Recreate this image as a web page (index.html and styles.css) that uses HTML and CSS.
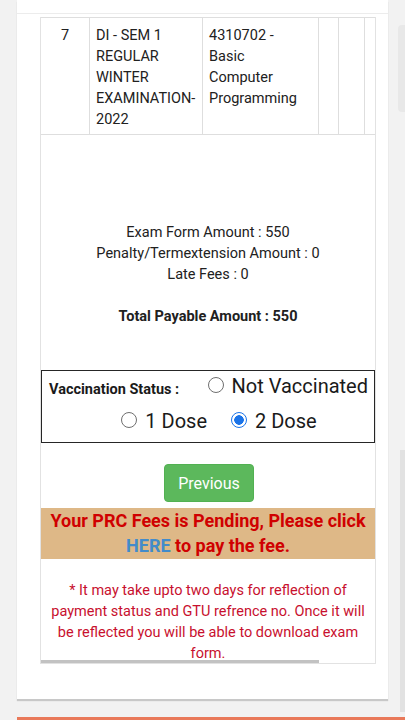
FILE: index.html
```html
<!DOCTYPE html>
<html>
<head>
<meta charset="utf-8">
<link rel="stylesheet" href="styles.css">
</head>
<body>
<div class="page">
  <div class="card">
    <div class="card-top"></div>
    <div class="box">
      <table class="grid">
        <colgroup>
          <col class="w1"><col class="w2"><col class="w3"><col class="w4"><col class="w5"><col class="w6">
        </colgroup>
        <tr>
          <td class="num">7</td>
          <td>DI - SEM 1<br>REGULAR<br>WINTER<br>EXAMINATION-<br>2022</td>
          <td>4310702 -<br>Basic<br>Computer<br>Programming</td>
          <td></td><td></td><td class="last"></td>
        </tr>
      </table>
      <div class="amounts">
        <div>Exam Form Amount : 550</div>
        <div>Penalty/Termextension Amount : 0</div>
        <div>Late Fees : 0</div>
        <div class="total">Total Payable Amount : 550</div>
      </div>
      <div class="vacc">
        <div class="vrow1">
          <span class="vlabel">Vaccination Status :</span>
          <label class="opt"><input type="radio" name="v"> Not Vaccinated</label>
        </div>
        <div class="vrow2">
          <label class="opt"><input type="radio" name="v"> 1 Dose</label>
          <label class="opt"><input type="radio" name="v" checked> 2 Dose</label>
        </div>
      </div>
      <div class="actions"><button class="btn">Previous</button></div>
      <div class="banner">Your PRC Fees is Pending, Please click <a class="here">HERE</a> to pay the fee.</div>
      <p class="note">* It may take upto two days for reflection of payment status and GTU refrence no. Once it will be reflected you will be able to download exam form.</p>
      <div class="hscroll"><div class="hthumb"></div></div>
    </div>
  </div>
  <div class="orange"></div>
</div>
<div class="vthumb"></div>
<div class="vstrip"></div>
</body>
</html>
```

FILE: styles.css
```css
html, body {
  margin: 0;
  padding: 0;
  height: 720px;
  overflow: hidden;
}
body {
  background: #f2f2f2;
  font-family: Roboto, "Liberation Sans", sans-serif;
  color: #212121;
  position: relative;
}
.page {
  padding-left: 17px;
}
.card {
  width: 371px;
  background: #fff;
  box-shadow: 0 2px 1px #c8c8c8;
  padding: 0 12px 35px 23px;
  box-sizing: border-box;
  position: relative;
}
.card-top {
  height: 13px;
  margin: 0 -12px 3px -23px;
  border-bottom: 1px solid #ececec;
}
.box {
  border: 1px solid #e2e2e2;
  border-top: none;
  width: 336px;
  box-sizing: border-box;
  position: relative;
  overflow: hidden;
}
.grid {
  border-collapse: collapse;
  table-layout: fixed;
  width: 345px;
  font-size: 14.5px;
  line-height: 21px;
  margin-left: -1px;
}
.w1 { width: 49px; }
.w2 { width: 113px; }
.w3 { width: 116px; }
.w4 { width: 20px; }
.w5 { width: 26px; }
.w6 { width: 21px; }
.grid td {
  border: 1px solid #dedede;
  vertical-align: top;
  padding: 7px 6px 4px 6px;
  white-space: nowrap;
  overflow: hidden;
}
.grid td.num {
  text-align: center;
}
.amounts {
  margin-top: 87px;
  text-align: center;
  font-size: 14.5px;
  line-height: 21px;
}
.total {
  font-weight: bold;
  margin-top: 21px;
}
.vacc {
  margin-top: 43px;
  border: 1.5px solid #262626;
  height: 73px;
  box-sizing: border-box;
  font-size: 20px;
  line-height: 24px;
  color: #1a1a1a;
}
.vrow1 {
  display: flex;
  justify-content: space-between;
  align-items: baseline;
  padding: 3px 6px 0 7px;
}
.vlabel {
  font-size: 14.5px;
  font-weight: bold;
}
.vrow2 {
  display: flex;
  justify-content: center;
  gap: 24px;
  padding: 7px 0 0 22px;
}
.opt {
  display: inline-flex;
  align-items: center;
  gap: 8px;
}
.opt input {
  appearance: none;
  -webkit-appearance: none;
  width: 16px;
  height: 16px;
  margin: 0;
  border: 1px solid #6f6f6f;
  border-radius: 50%;
  background: #fff;
  position: relative;
  top: -1px;
}
.opt input:checked {
  border: 1.5px solid #1a73e8;
  background: radial-gradient(circle, #1a73e8 0 4.5px, #fff 5px);
}
.actions {
  text-align: center;
  padding-top: 21px;
}
.btn {
  font-family: Roboto, "Liberation Sans", sans-serif;
  font-size: 16px;
  color: #fff;
  background: #5cb85c;
  border: 1px solid #52b152;
  border-radius: 4px;
  width: 90px;
  height: 38px;
  padding: 0;
  margin-left: 2px;
}
.banner {
  margin-top: 6px;
  background: #deb887;
  color: #d00000;
  font-weight: bold;
  font-size: 18px;
  line-height: 25px;
  text-align: center;
  padding: 0 0 1px;
}
.here {
  color: #428bca;
}
.note {
  margin: 21px 0 0;
  padding: 0 8px;
  text-align: center;
  color: #c8102e;
  font-size: 14.5px;
  line-height: 21px;
  height: 80px;
}
.hscroll {
  height: 3px;
  position: relative;
}
.hthumb {
  width: 278px;
  height: 3px;
  background: #c2c2c2;
}
.orange {
  margin-top: 18px;
  height: 10px;
  background: #e9795a;
}
.vthumb {
  position: absolute;
  left: 398px;
  top: 25px;
  width: 7px;
  height: 87px;
  background: #e8e8e8;
  border-radius: 4px 0 0 4px;
}
.vstrip {
  position: absolute;
  left: 400px;
  top: 450px;
  width: 5px;
  height: 262px;
  background: #e2e2e2;
}
```
